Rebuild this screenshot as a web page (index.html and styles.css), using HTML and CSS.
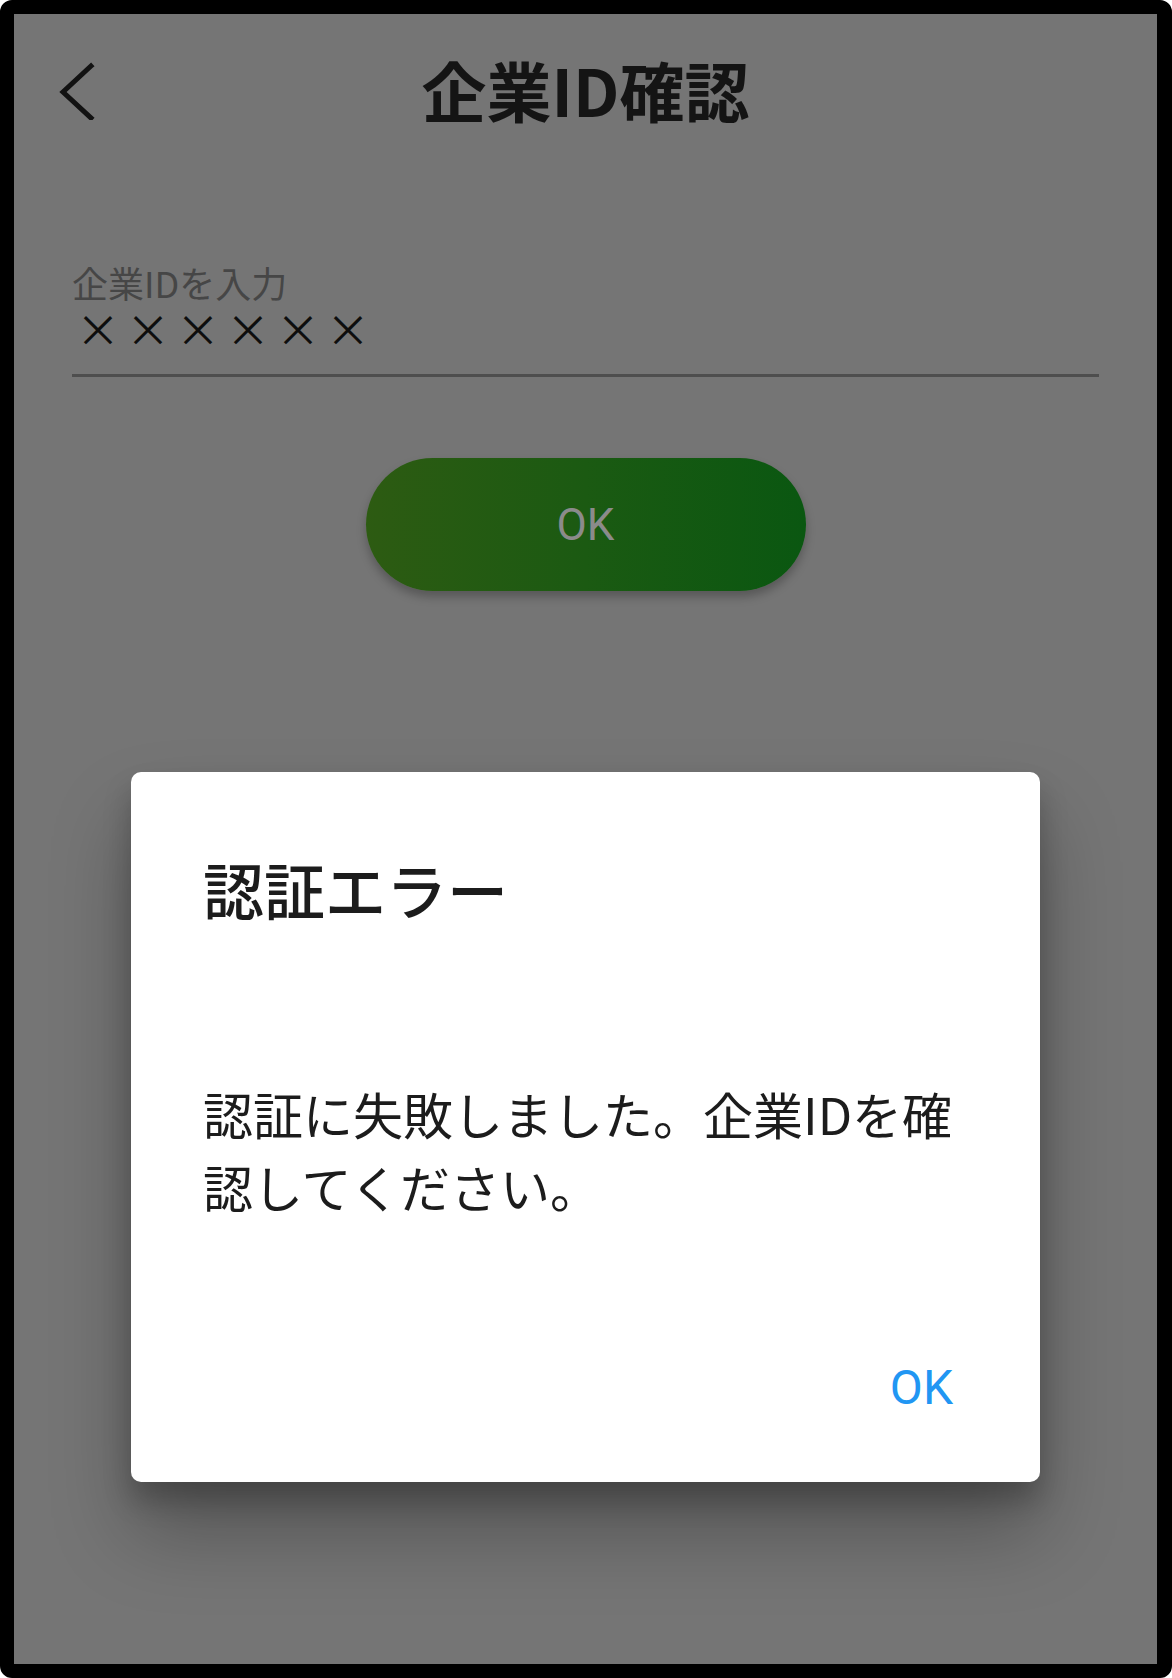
FILE: index.html
```html
<!DOCTYPE html>
<html lang="ja">
<head>
<meta charset="utf-8">
<title>企業ID確認</title>
<link rel="stylesheet" href="styles.css">
</head>
<body>
<div class="frame">
  <header class="appbar">
    <button class="back" aria-label="戻る">
      <svg width="40" height="60" viewBox="0 0 40 60"><polyline points="33,6 5,32 33,58" fill="none" stroke="#121212" stroke-width="5" stroke-linecap="square"/></svg>
    </button>
    <h1 class="title">企業ID確認</h1>
  </header>

  <section class="field">
    <div class="label">企業IDを入力</div>
    <div class="value">××××××</div>
  </section>

  <div class="actions">
    <button class="primary">OK</button>
  </div>

  <div class="dialog" role="alertdialog">
    <h2 class="dialog-title">認証エラー</h2>
    <p class="dialog-body">認証に失敗しました。企業IDを確認してください。</p>
    <div class="dialog-actions">
      <button class="text-btn">OK</button>
    </div>
  </div>
</div>
</body>
</html>
```

FILE: styles.css
```css
html, body {
  margin: 0;
  padding: 0;
  background: #ffffff;
}

body {
  font-family: "Noto Sans CJK JP", "Noto Sans", sans-serif;
}

.frame {
  position: relative;
  box-sizing: border-box;
  width: 1172px;
  height: 1678px;
  border: 14px solid #000;
  border-right-width: 15px;
  border-radius: 12px;
  background: #757575;
  display: flex;
  flex-direction: column;
}

.appbar {
  position: relative;
  height: 150px;
  display: flex;
  align-items: center;
  justify-content: center;
}

.back {
  position: absolute;
  left: 44px;
  top: 46px;
  padding: 0;
  border: 0;
  background: none;
  display: flex;
}

.title {
  margin: 0;
  font-size: 65px;
  font-weight: 700;
  color: #141414;
  line-height: 1;
}

.field {
  margin: 98px 58px 0;
  border-bottom: 3px solid #4e4e4e;
  padding-bottom: 24px;
}

.label {
  font-size: 36px;
  line-height: 40px;
  color: #464646;
}

.value {
  margin-top: 4px;
  padding-left: 4px;
  font-size: 44px;
  line-height: 44px;
  color: #0e0e0e;
  letter-spacing: 6px;
}

.actions {
  display: flex;
  justify-content: center;
  margin-top: 81px;
}

.primary {
  width: 440px;
  height: 133px;
  border: 0;
  border-radius: 67px;
  background: linear-gradient(90deg, #2d5b12 0%, #1b5a12 50%, #0a5711 100%);
  box-shadow: 0 6px 10px rgba(0, 0, 0, 0.25);
  font-family: Roboto, "Noto Sans", sans-serif;
  font-size: 44px;
  color: #8b8b8b;
  padding: 0;
}

.dialog {
  position: absolute;
  left: 117px;
  top: 758px;
  width: 909px;
  height: 710px;
  box-sizing: border-box;
  background: #ffffff;
  border-radius: 10px;
  box-shadow: 0 50px 80px rgba(0, 0, 0, 0.28), 0 18px 28px rgba(0, 0, 0, 0.22);
  display: flex;
  flex-direction: column;
  padding: 80px 72px 0;
}

.dialog-title {
  margin: 0;
  font-size: 61px;
  font-weight: 500;
  line-height: 1.2;
  color: #1c1c1c;
}

.dialog-body {
  margin: 152px 0 0;
  font-size: 50px;
  line-height: 73px;
  color: #1c1c1c;
}

.dialog-actions {
  margin-top: auto;
  display: flex;
  justify-content: flex-end;
  padding: 0 15px 66px 0;
}

.text-btn {
  border: 0;
  background: none;
  padding: 0;
  font-family: Roboto, "Noto Sans", sans-serif;
  font-size: 48px;
  font-weight: 400;
  color: #2196f3;
}
```
